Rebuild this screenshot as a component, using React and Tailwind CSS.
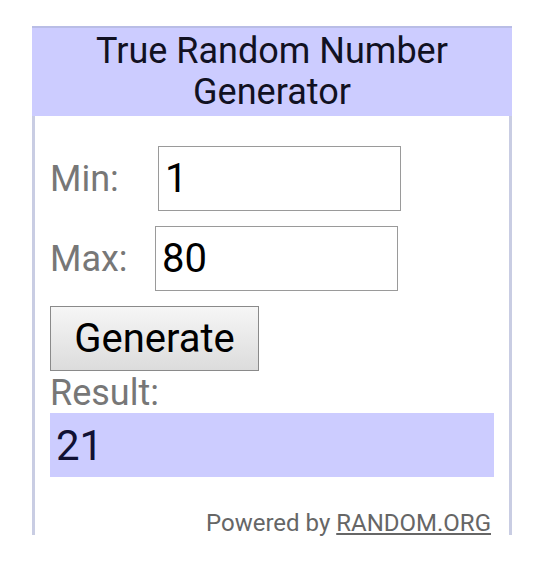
export default function App() {
  const font = { fontFamily: "Roboto, 'Noto Sans', sans-serif" };
  return (
    <div className="w-[536px] h-[570px] bg-white pt-[26px] pl-[32px]" style={font}>
      <div className="w-[480px]">
        <div className="h-[90px] bg-[#ccccff] border-t-2 border-[#b9bde6] flex flex-col items-center justify-center text-[36px] leading-[41px] text-[#111122]">
          <div>True Random Number</div>
          <div>Generator</div>
        </div>
        <div className="h-[419px] border-x-[3px] border-[#c9cde3] bg-white pl-[15px] pr-[15px] pt-[30px]">
          <div className="flex items-center h-[65px]">
            <span className="text-[36px] text-[#777777] w-[108px]">Min:</span>
            <div className="w-[243px] h-[65px] border border-[#9a9a9a] flex items-center pl-[6px] text-[40px] text-black">1</div>
          </div>
          <div className="flex items-center h-[65px] mt-[15px]">
            <span className="text-[36px] text-[#777777] w-[105px]">Max:</span>
            <div className="w-[243px] h-[65px] border border-[#9a9a9a] flex items-center pl-[6px] text-[40px] text-black">80</div>
          </div>
          <div className="mt-[15px] w-[209px] h-[65px] border border-[#8a8a8a] bg-gradient-to-b from-[#f6f6f6] to-[#dcdcdc] flex items-center justify-center text-[40px] text-black">
            Generate
          </div>
          <div className="text-[36px] leading-[40px] text-[#777777] mt-[2px]">Result:</div>
          <div className="mt-0 w-[444px] h-[64px] bg-[#ccccff] flex items-center pl-[6px] text-[42px] text-[#111133]">21</div>
          <div className="mt-[32px] text-right pr-[3px] text-[24px] leading-[28px] text-[#666666]">
            Powered by <span className="underline">RANDOM.ORG</span>
          </div>
        </div>
      </div>
    </div>
  );
}
